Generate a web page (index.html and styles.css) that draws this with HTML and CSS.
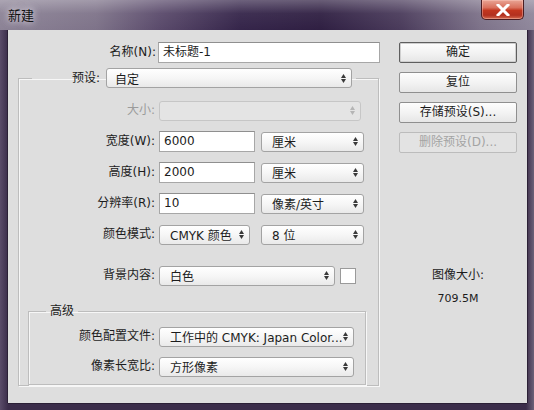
FILE: index.html
```html
<!DOCTYPE html>
<html lang="zh">
<head>
<meta charset="utf-8">
<title>新建</title>
<link rel="stylesheet" href="styles.css">
</head>
<body>
<div class="window">
  <div class="titlebar">
    <span class="title">新建</span>
    <span class="close"><svg width="14" height="12" viewBox="0 0 14 12"><path d="M2 1 L12 11 M12 1 L2 11" stroke="#fff" stroke-width="3" stroke-linecap="square"/></svg></span>
  </div>
  <div class="frame">
    <div class="client">
      <div class="main">
        <div class="name-row">
          <span class="lbl name-lbl">名称(N):</span>
          <div class="input name-input">未标题-1</div>
        </div>
        <fieldset class="group outer">
          <legend class="preset">
            <span class="lbl preset-lbl">预设:</span>
            <div class="select preset-select"><span>自定</span><svg class="arr" width="5" height="9" viewBox="0 0 5 9"><path d="M0 4 L2.5 0 L5 4Z M0 5 L5 5 L2.5 9Z"/></svg></div>
          </legend>
          <div class="row first">
            <span class="lbl dis">大小:</span>
            <div class="select disabled size-select"><span></span><svg class="arr" width="5" height="9" viewBox="0 0 5 9"><path d="M0 4 L2.5 0 L5 4Z M0 5 L5 5 L2.5 9Z"/></svg></div>
          </div>
          <div class="row">
            <span class="lbl">宽度(W):</span>
            <div class="input num-input">6000</div>
            <div class="select unit-select"><span>厘米</span><svg class="arr" width="5" height="9" viewBox="0 0 5 9"><path d="M0 4 L2.5 0 L5 4Z M0 5 L5 5 L2.5 9Z"/></svg></div>
          </div>
          <div class="row">
            <span class="lbl">高度(H):</span>
            <div class="input num-input">2000</div>
            <div class="select unit-select"><span>厘米</span><svg class="arr" width="5" height="9" viewBox="0 0 5 9"><path d="M0 4 L2.5 0 L5 4Z M0 5 L5 5 L2.5 9Z"/></svg></div>
          </div>
          <div class="row">
            <span class="lbl">分辨率(R):</span>
            <div class="input num-input">10</div>
            <div class="select unit-select"><span>像素/英寸</span><svg class="arr" width="5" height="9" viewBox="0 0 5 9"><path d="M0 4 L2.5 0 L5 4Z M0 5 L5 5 L2.5 9Z"/></svg></div>
          </div>
          <div class="row">
            <span class="lbl">颜色模式:</span>
            <div class="select mode-select"><span>CMYK 颜色</span><svg class="arr" width="5" height="9" viewBox="0 0 5 9"><path d="M0 4 L2.5 0 L5 4Z M0 5 L5 5 L2.5 9Z"/></svg></div>
            <div class="select bits-select"><span>8 位</span><svg class="arr" width="5" height="9" viewBox="0 0 5 9"><path d="M0 4 L2.5 0 L5 4Z M0 5 L5 5 L2.5 9Z"/></svg></div>
          </div>
          <div class="row bg-row">
            <span class="lbl">背景内容:</span>
            <div class="select bg-select"><span>白色</span><svg class="arr" width="5" height="9" viewBox="0 0 5 9"><path d="M0 4 L2.5 0 L5 4Z M0 5 L5 5 L2.5 9Z"/></svg></div>
            <div class="swatch"></div>
          </div>
          <fieldset class="group adv">
            <legend class="adv-legend">高级</legend>
            <div class="row arow first">
              <span class="lbl">颜色配置文件:</span>
              <div class="select profile-select"><span>工作中的 CMYK: Japan Color...</span><svg class="arr" width="5" height="9" viewBox="0 0 5 9"><path d="M0 4 L2.5 0 L5 4Z M0 5 L5 5 L2.5 9Z"/></svg></div>
            </div>
            <div class="row arow">
              <span class="lbl">像素长宽比:</span>
              <div class="select profile-select"><span>方形像素</span><svg class="arr" width="5" height="9" viewBox="0 0 5 9"><path d="M0 4 L2.5 0 L5 4Z M0 5 L5 5 L2.5 9Z"/></svg></div>
            </div>
          </fieldset>
        </fieldset>
      </div>
      <div class="side">
        <div class="btn default">确定</div>
        <div class="btn">复位</div>
        <div class="btn">存储预设(S)...</div>
        <div class="btn disabled">删除预设(D)...</div>
        <div class="info">
          <div class="info-title">图像大小:</div>
          <div class="info-value">709.5M</div>
        </div>
      </div>
    </div>
  </div>
</div>
</body>
</html>
```

FILE: styles.css
```css
* { box-sizing: border-box; }
body {
  margin: 0;
  background: #3a2e47;
  font: 12px "DejaVu Sans", "Noto Sans CJK SC", sans-serif;
  color: #1c1c1c;
}
.window {
  width: 534px;
  height: 410px;
  display: flex;
  flex-direction: column;
  background:
    linear-gradient(90deg, #5a4c69 0, #3b2d4a 8px, #3b2d4a 526px, #6d6279 534px);
}
.titlebar {
  height: 30px;
  display: flex;
  align-items: flex-start;
  padding-left: 8px;
  background:
    linear-gradient(180deg, rgba(255,255,255,0.28) 0, rgba(255,255,255,0.05) 45%, rgba(255,255,255,0) 100%),
    linear-gradient(90deg, #8c8396 0, #7e7389 18%, #5a4a6b 30%, #35254a 45%, #2f1f42 60%, #4a3b5b 75%, #7d7289 90%, #8f879b 100%);
}
.title {
  margin-top: 7px;
  font: 13px "Noto Sans CJK SC", sans-serif;
  line-height: 16px;
  color: #111;
  text-shadow: 0 0 6px rgba(230,225,235,0.9), 0 0 10px rgba(230,225,235,0.7);
}
.close {
  margin-left: auto;
  margin-right: 10px;
  width: 43px;
  height: 20px;
  border: 1px solid #4a1d22;
  border-top: none;
  border-radius: 0 0 5px 5px;
  background: linear-gradient(180deg, #e9a595 0, #d9705c 40%, #c2361f 55%, #b2301f 80%, #d46a4f 100%);
  display: flex;
  align-items: center;
  justify-content: center;
  box-shadow: inset 0 0 0 1px rgba(255,210,200,0.4);
}
.frame {
  flex: 1;
  padding: 0 7px 7px 8px;
}
.client {
  height: 373px;
  background: #dedede;
  display: flex;
  box-shadow: -1px 0 0 #2b2036, 1px 0 0 #2b2036, 0 1px 0 #2b2036;
}
.main {
  width: 391px;
  padding-top: 12px;
}
.lbl {
  white-space: nowrap;
  text-align: right;
  line-height: 21px;
}
.dis { color: #9b9b9b; }
.name-row {
  display: flex;
  height: 21px;
}
.name-lbl { width: 150px; padding-right: 2px; }
.input {
  height: 21px;
  background: #fff;
  border: 1px solid #a7a7a7;
  border-top-color: #8f8f8f;
  padding-left: 4px;
  line-height: 19px;
  white-space: nowrap;
}
.name-input { width: 222px; }
.select {
  height: 20px;
  border: 1px solid #a3a3a3;
  border-radius: 3px;
  background: linear-gradient(180deg, #ffffff 0, #f6f6f6 50%, #e9e9e9 100%);
  display: flex;
  align-items: center;
  padding: 0 5px 0 10px;
  white-space: nowrap;
}
.select span { flex: 1; overflow: hidden; }
.arr { fill: #3a3a3a; flex: none; }
.select.disabled {
  background: #e4e4e4;
  border-color: #c6c6c6;
}
.select.disabled .arr { fill: #b5b5b5; }

.group {
  margin: 0;
  padding: 0;
  border: 1px solid #bdbdbd;
  box-shadow: 1px 1px 0 #f7f7f7, inset 1px 1px 0 #f7f7f7;
}
.outer {
  margin: 5px 0 0 10px;
  width: 361px;
  height: 318px;
}
.preset {
  margin-left: 13px;
  padding: 0 4px 0 0;
  display: flex;
  height: 20px;
}
.preset-lbl { width: 70px; line-height: 20px; padding-right: 2px; }
.preset-select { width: 246px; margin-left: 4px; padding-left: 8px; }

.row {
  display: flex;
  align-items: center;
  height: 21px;
  margin-top: 10px;
}
.row.first { margin-top: 12px; }
.row > .lbl { width: 137px; padding-right: 1px; }
.row > .lbl + * { margin-left: 3px; }
.size-select { width: 202px; }
.num-input { width: 96px; }
.unit-select { width: 103px; margin-left: 6px; }
.mode-select { width: 91px; }
.bits-select { width: 103px; margin-left: 11px; }
.bg-row { margin-top: 20px; }
.bg-select { width: 176px; }
.swatch {
  width: 16px;
  height: 16px;
  margin-left: 5px;
  background: #fff;
  border: 1px solid #9a9a9a;
}

.adv {
  margin: 17px 0 0 9px;
  width: 338px;
  height: 82px;
}
.adv-legend {
  margin-left: 17px;
  padding: 0 4px;
  line-height: 16px;
}
.arow > .lbl { width: 127px; }
.arow.first { margin-top: 7px; }
.arow { margin-top: 9px; }
.profile-select { width: 195px; }

.side {
  width: 118px;
  padding-top: 12px;
  display: flex;
  flex-direction: column;
  gap: 9px;
}
.btn {
  height: 21px;
  border: 1px solid #8f8f8f;
  border-radius: 2px;
  background: linear-gradient(180deg, #fdfdfd 0, #f3f3f3 50%, #e6e6e6 100%);
  text-align: center;
  line-height: 19px;
  white-space: nowrap;
}
.btn.default {
  border-color: #5e5e5e;
  box-shadow: inset 0 0 0 1px #cfcfcf;
}
.btn.disabled {
  color: #a3a3a3;
  border-color: #bcbcbc;
  background: #e3e3e3;
}
.info {
  margin-top: 105px;
  text-align: center;
  line-height: 16px;
}
.info-value {
  margin-top: 8px;
  font-size: 11px;
}
```
